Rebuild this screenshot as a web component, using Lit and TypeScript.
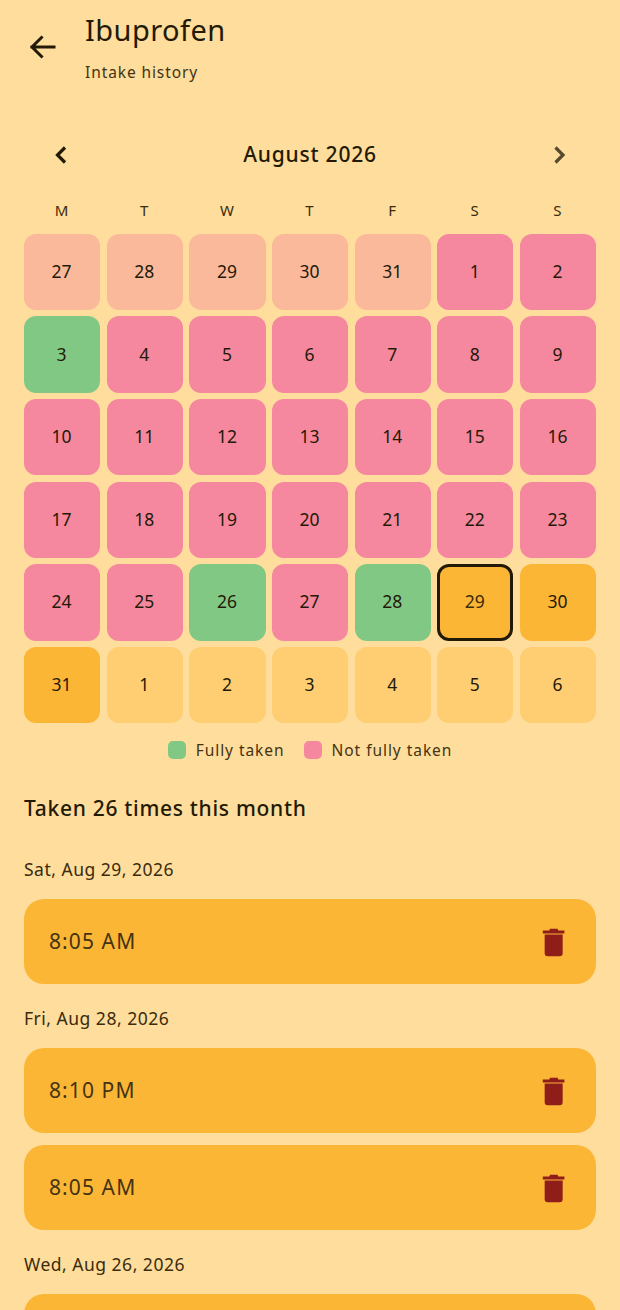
import { LitElement, html, css, svg } from "lit";
import { customElement } from "lit/decorators.js";

type Kind = "peach" | "pink" | "green" | "orange" | "light";
interface Cell { d: number; k: Kind; today?: boolean }

const cells: Cell[] = [
  ...[27, 28, 29, 30, 31].map((d) => ({ d, k: "peach" as Kind })),
  ...Array.from({ length: 28 }, (_, i) => {
    const d = i + 1;
    return { d, k: (d === 3 || d === 26 || d === 28 ? "green" : "pink") as Kind };
  }),
  { d: 29, k: "orange", today: true },
  { d: 30, k: "orange" },
  { d: 31, k: "orange" },
  ...[1, 2, 3, 4, 5, 6].map((d) => ({ d, k: "light" as Kind })),
];

const trash = svg`<svg class="trash" viewBox="0 0 24 24" width="32" height="32"><path fill="#8f1d1a" d="M5 6.400h13.500v14.100a2.200 2.200 0 0 1-2.200 2.200H7.200a2.200 2.200 0 0 1-2.200-2.200zM3.600 3.400h4.900L9 2h5.700l.5 1.400h4.600v2.200H3.600z"/></svg>`;

@customElement("app-root")
export class AppRoot extends LitElement {
  static styles = css`
    :host {
      display: block;
      width: 620px;
      height: 1310px;
      overflow: hidden;
      background: #ffdd9c;
      color: #231a06;
      font-family: "Noto Sans", sans-serif;
    }
    .top { display: flex; height: 100px; }
    .back { width: 85px; padding: 30px 0 0 27px; box-sizing: border-box; }
    .titles { display: flex; flex-direction: column; }
    .title { font-size: 29px; line-height: 36px; margin-top: 12px; letter-spacing: 0.45px; }
    .sub { font-size: 15.5px; line-height: 20px; margin-top: 14px; color: #443412; letter-spacing: 0.9px; }
    .month {
      display: flex; align-items: center; justify-content: space-between;
      height: 40px; margin-top: 35px; padding: 0 48px;
    }
    .month-name { font-size: 21px; font-weight: 500; letter-spacing: 0.8px; margin-top: -2px; }
    .cal { padding: 0 24px; }
    .dow { display: grid; grid-template-columns: repeat(7, 1fr); gap: 6.4px; margin-top: 23px; height: 24px; align-items: center; }
    .dow span { text-align: center; font-size: 15px; color: #3a2c0c; padding-right: 1px; }
    .grid { display: grid; grid-template-columns: repeat(7, 1fr); gap: 6.4px; margin-top: 11.8px; }
    .cell {
      aspect-ratio: 1; border-radius: 12px; display: flex; align-items: center; justify-content: center;
      font-size: 17.5px; color: #231a06; box-sizing: border-box; padding: 0 1px 2px 0;
    }
    .peach { background: #fbb99c; }
    .pink { background: #f5879f; }
    .green { background: #81c885; }
    .orange { background: #fcb636; }
    .light { background: #ffce72; }
    .today { border: 3px solid #231a06; color: #3a2c0c; }
    .legend { display: flex; justify-content: center; align-items: center; height: 20px; margin-top: 17px; font-size: 15.5px; color: #443412; letter-spacing: 0.95px; }
    .sw { width: 18px; height: 18px; border-radius: 5px; margin-right: 10px; }
    .item + .item { margin-left: 19px; }
    .item { display: flex; align-items: center; }
    .count { font-size: 21px; font-weight: 500; line-height: 28px; margin: 34px 24px 0; letter-spacing: 0.7px; }
    .list { padding: 0 24px; }
    .date { font-size: 17.5px; line-height: 24px; color: #3a2c0c; letter-spacing: 0.5px; }
    .date.first { margin-top: 35px; }
    .row {
      height: 85px; border-radius: 20px; background: #fcb636; margin-top: 12px;
      display: flex; align-items: center; justify-content: space-between;
      padding: 0 26px 0 25px; font-size: 21px; color: #443412; letter-spacing: 1.1px;
    }
    .row span { padding-bottom: 2px; }
    .date + .row { margin-top: 18px; }
    .row + .date { margin-top: 22px; }
    .trash { display: block; }
  `;

  render() {
    const row = (t: string) => html`<div class="row"><span>${t}</span>${trash}</div>`;
    return html`
      <div class="top">
        <div class="back">
          <svg viewBox="0 0 30 30" width="30" height="30" fill="none" stroke="#231a06" stroke-width="3" stroke-linecap="square">
            <path d="M27 17H5M14.5 7.5 5 17l9.5 9.5"/>
          </svg>
        </div>
        <div class="titles">
          <div class="title">Ibuprofen</div>
          <div class="sub">Intake history</div>
        </div>
      </div>
      <div class="month">
        <svg viewBox="0 0 24 24" width="24" height="24" fill="none" stroke="#231a06" stroke-width="3.2"><path d="M17 4.500 9.500 12l7.500 7.500"/></svg>
        <span class="month-name">August 2026</span>
        <svg viewBox="0 0 24 24" width="24" height="24" fill="none" stroke="#554a30" stroke-width="3.2"><path d="M7.500 4.500 15 12l-7.500 7.500"/></svg>
      </div>
      <div class="cal">
        <div class="dow">${["M","T","W","T","F","S","S"].map((d) => html`<span>${d}</span>`)}</div>
        <div class="grid">
          ${cells.map((c) => html`<div class="cell ${c.k} ${c.today ? "today" : ""}">${c.d}</div>`)}
        </div>
      </div>
      <div class="legend">
        <div class="item"><div class="sw green"></div>Fully taken</div>
        <div class="item"><div class="sw pink"></div>Not fully taken</div>
      </div>
      <div class="count">Taken 26 times this month</div>
      <div class="list">
        <div class="date first">Sat, Aug 29, 2026</div>
        ${row("8:05 AM")}
        <div class="date">Fri, Aug 28, 2026</div>
        ${row("8:10 PM")}
        ${row("8:05 AM")}
        <div class="date">Wed, Aug 26, 2026</div>
        <div class="row"></div>
      </div>
    `;
  }
}
